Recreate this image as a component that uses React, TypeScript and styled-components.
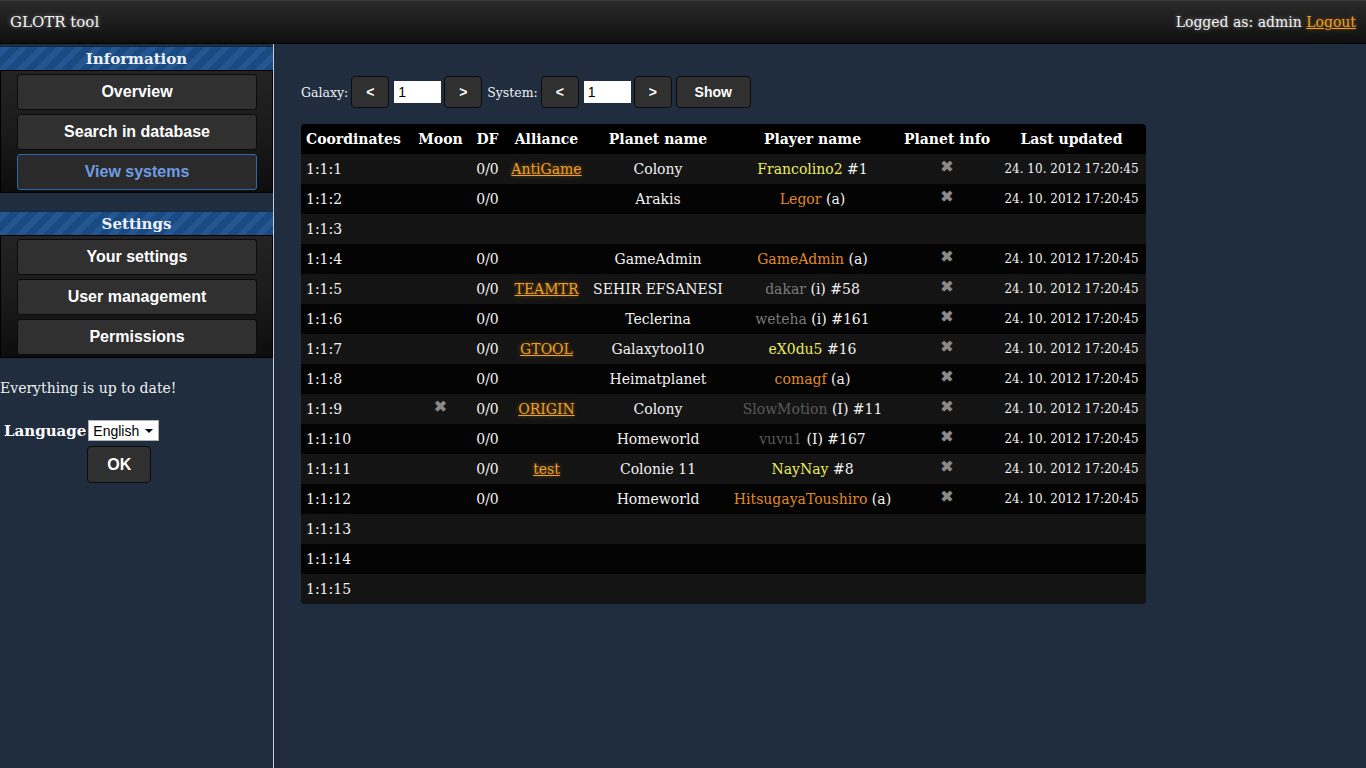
import React from 'react';
import styled, { createGlobalStyle, css } from 'styled-components';

const serif = `"DejaVu Serif", Georgia, serif`;
const sans = `"Liberation Sans", Arial, sans-serif`;

const Global = createGlobalStyle`
  html, body { margin: 0; padding: 0; background: #1f2d3e; }
  body { font-family: ${serif}; color: #fff; }
  * { box-sizing: border-box; }
`;

const texture = css`
  background-color: #393939;
  background-image: radial-gradient(rgba(0, 0, 0, 0.35) 0.6px, transparent 0.8px);
  background-size: 2px 2px;
`;

const Page = styled.div`
  min-height: 100vh;
  display: flex;
  flex-direction: column;
`;

const TopBar = styled.header`
  height: 44px;
  display: flex;
  align-items: center;
  justify-content: space-between;
  padding: 0 10px 0 10px;
  background: linear-gradient(#2a2a2a, #0f0f0f);
  border-top: 1px solid #3c3c3c;
  border-bottom: 1px solid #000;
  color: #f4f4f4;
  text-shadow: 0 0 4px rgba(255, 255, 255, 0.45);
`;

const Brand = styled.span`
  font-size: 15px;
`;

const UserInfo = styled.span`
  font-size: 14px;
`;

const Link = styled.a`
  color: #f0a024;
  text-decoration: underline;
  cursor: pointer;
  text-shadow: 0 0 4px rgba(240, 160, 36, 0.5);
`;

const Body = styled.div`
  flex: 1;
  display: flex;
`;

const Sidebar = styled.aside`
  width: 274px;
  flex: none;
  border-right: 1px solid #c6ccd3;
  padding-top: 2px;
  display: flex;
  flex-direction: column;
`;

const SectionTitle = styled.div<{ $first?: boolean }>`
  height: 25px;
  margin-top: ${(p) => (p.$first ? '0' : '18px')};
  display: flex;
  align-items: center;
  justify-content: center;
  font-weight: bold;
  font-size: 15px;
  color: #eef2f8;
  border-top: 1px solid #0f2a4a;
  border-bottom: 1px solid #000;
  background: repeating-linear-gradient(
    -45deg,
    #1a4a82 0px,
    #1a4a82 7px,
    #245791 7px,
    #245791 13px
  );
`;

const Menu = styled.nav`
  display: flex;
  flex-direction: column;
  gap: 4px;
  padding: 3px 15px 2px 16px;
  background: linear-gradient(#232323 0%, #1b1b1b 50%, #0d0d0d 100%);
  border: 1px solid #000;
  border-top: none;
`;

const MenuButton = styled.a<{ $active?: boolean }>`
  height: 36px;
  display: flex;
  align-items: center;
  justify-content: center;
  font-family: ${sans};
  font-weight: bold;
  font-size: 16px;
  border-radius: 3px;
  border: 1px solid #0b0b0b;
  color: #fff;
  ${texture}
  ${(p) =>
    p.$active &&
    css`
      background: #2a2a2a;
      border-color: #2f68ad;
      color: #6f9ce2;
    `}
`;

const Status = styled.p`
  margin: 22px 0 0 0;
  font-size: 14px;
  color: #f0f0f0;
`;

const LangForm = styled.div`
  display: grid;
  grid-template-columns: auto auto;
  justify-content: start;
  align-items: center;
  column-gap: 2px;
  row-gap: 5px;
  margin: 24px 0 0 4px;
`;

const LangLabel = styled.label`
  font-weight: bold;
  font-size: 15px;
`;

const SelectWrap = styled.span`
  position: relative;
  display: inline-block;
  width: 71px;
  height: 21px;
  &::after {
    content: '';
    position: absolute;
    right: 6px;
    top: 9px;
    border-left: 4px solid transparent;
    border-right: 4px solid transparent;
    border-top: 4px solid #000;
    pointer-events: none;
  }
`;

const Select = styled.select`
  appearance: none;
  -webkit-appearance: none;
  width: 100%;
  height: 100%;
  border: 1px solid #b0b0b0;
  border-radius: 0;
  background: #fff;
  font-family: ${sans};
  font-size: 14px;
  color: #000;
  padding: 0 0 0 4px;
`;

const OkButton = styled.button`
  grid-column: 2;
  width: 64px;
  height: 37px;
  margin-left: -1px;
  border-radius: 4px;
  border: 1px solid #0b0b0b;
  ${texture}
  color: #fff;
  font-family: ${sans};
  font-weight: bold;
  font-size: 16px;
`;

const Main = styled.main`
  flex: 1;
  padding: 32px 27px 0 27px;
`;

const Toolbar = styled.div`
  display: flex;
  align-items: center;
  gap: 4px;
`;

const ToolLabel = styled.span`
  font-size: 12.5px;
  color: #eef0f2;
  margin: 0 -1px 0 1px;
  &:first-child {
    margin-left: 0;
  }
`;

const ToolButton = styled.button<{ $wide?: boolean }>`
  height: 32px;
  width: ${(p) => (p.$wide ? '75px' : '38px')};
  border-radius: 4px;
  border: 1px solid #0b0b0b;
  ${texture}
  color: #fff;
  font-family: ${sans};
  font-weight: bold;
  font-size: 14px;
  padding: 0;
`;

const NumInput = styled.input`
  width: 47px;
  height: 22px;
  margin: 0 -1px 0 1px;
  border: none;
  background: #fff;
  font-family: ${sans};
  font-size: 14px;
  padding: 0 4px;
  color: #000;
`;

const Table = styled.table`
  margin-top: 16px;
  width: 845px;
  table-layout: fixed;
  border-collapse: separate;
  border-spacing: 0;
  border-radius: 4px;
  overflow: hidden;
  background: #000;
`;

const Th = styled.th<{ $left?: boolean }>`
  height: 30px;
  padding: 0 5px;
  text-align: ${(p) => (p.$left ? 'left' : 'center')};
  font-size: 14px;
  font-weight: bold;
  color: #fff;
  white-space: nowrap;
`;

const Row = styled.tr<{ $odd: boolean }>`
  height: 30px;
  background: ${(p) => (p.$odd ? '#141414' : '#040404')};
`;

const Td = styled.td<{ $left?: boolean; $small?: boolean }>`
  padding: 0 5px;
  text-align: ${(p) => (p.$left ? 'left' : 'center')};
  font-size: ${(p) => (p.$small ? '12px' : '14px')};
  color: #f2f2f2;
  white-space: nowrap;
`;

const Cross = styled.span`
  display: inline-block;
  font-family: "DejaVu Sans", sans-serif;
  font-size: 16px;
  color: #8a8a8a;
  position: relative;
  top: -3px;
  text-shadow: 0 0 1px rgba(140, 140, 140, 0.6);
`;

type Tone = 'yellow' | 'orange' | 'gray' | 'dim';
const toneColor: Record<Tone, string> = {
  yellow: '#ecec62',
  orange: '#e08a26',
  gray: '#7a7a7a',
  dim: '#5a5a5a',
};

const Player = styled.span<{ $tone: Tone }>`
  color: ${(p) => toneColor[p.$tone]};
`;

type SysRow = {
  pos: number;
  moon?: boolean;
  alliance?: string;
  planet?: string;
  player?: string;
  tone?: Tone;
  extra?: string;
};

const rows: SysRow[] = [
  { pos: 1, alliance: 'AntiGame', planet: 'Colony', player: 'Francolino2', tone: 'yellow', extra: ' #1' },
  { pos: 2, planet: 'Arakis', player: 'Legor', tone: 'orange', extra: ' (a)' },
  { pos: 3 },
  { pos: 4, planet: 'GameAdmin', player: 'GameAdmin', tone: 'orange', extra: ' (a)' },
  { pos: 5, alliance: 'TEAMTR', planet: 'SEHIR EFSANESI', player: 'dakar', tone: 'gray', extra: ' (i) #58' },
  { pos: 6, planet: 'Teclerina', player: 'weteha', tone: 'gray', extra: ' (i) #161' },
  { pos: 7, alliance: 'GTOOL', planet: 'Galaxytool10', player: 'eX0du5', tone: 'yellow', extra: ' #16' },
  { pos: 8, planet: 'Heimatplanet', player: 'comagf', tone: 'orange', extra: ' (a)' },
  { pos: 9, moon: true, alliance: 'ORIGIN', planet: 'Colony', player: 'SlowMotion', tone: 'dim', extra: ' (I) #11' },
  { pos: 10, planet: 'Homeworld', player: 'vuvu1', tone: 'dim', extra: ' (I) #167' },
  { pos: 11, alliance: 'test', planet: 'Colonie 11', player: 'NayNay', tone: 'yellow', extra: ' #8' },
  { pos: 12, planet: 'Homeworld', player: 'HitsugayaToushiro', tone: 'orange', extra: ' (a)' },
  { pos: 13 },
  { pos: 14 },
  { pos: 15 },
];

const colWidths = [110, 59, 35, 83, 140, 169, 100, 149];

export default function App() {
  return (
    <Page>
      <Global />
      <TopBar>
        <Brand>GLOTR tool</Brand>
        <UserInfo>
          Logged as: admin <Link>Logout</Link>
        </UserInfo>
      </TopBar>
      <Body>
        <Sidebar>
          <SectionTitle $first>Information</SectionTitle>
          <Menu>
            <MenuButton>Overview</MenuButton>
            <MenuButton>Search in database</MenuButton>
            <MenuButton $active>View systems</MenuButton>
          </Menu>
          <SectionTitle>Settings</SectionTitle>
          <Menu>
            <MenuButton>Your settings</MenuButton>
            <MenuButton>User management</MenuButton>
            <MenuButton>Permissions</MenuButton>
          </Menu>
          <Status>Everything is up to date!</Status>
          <LangForm>
            <LangLabel>Language</LangLabel>
            <SelectWrap>
              <Select defaultValue="en">
                <option value="en">English</option>
              </Select>
            </SelectWrap>
            <OkButton>OK</OkButton>
          </LangForm>
        </Sidebar>
        <Main>
          <Toolbar>
            <ToolLabel>Galaxy:</ToolLabel>
            <ToolButton>&lt;</ToolButton>
            <NumInput defaultValue="1" />
            <ToolButton>&gt;</ToolButton>
            <ToolLabel>System:</ToolLabel>
            <ToolButton>&lt;</ToolButton>
            <NumInput defaultValue="1" />
            <ToolButton>&gt;</ToolButton>
            <ToolButton $wide>Show</ToolButton>
          </Toolbar>
          <Table>
            <colgroup>
              {colWidths.map((w, i) => (
                <col key={i} style={{ width: w }} />
              ))}
            </colgroup>
            <thead>
              <tr>
                <Th $left>Coordinates</Th>
                <Th>Moon</Th>
                <Th>DF</Th>
                <Th>Alliance</Th>
                <Th>Planet name</Th>
                <Th>Player name</Th>
                <Th>Planet info</Th>
                <Th>Last updated</Th>
              </tr>
            </thead>
            <tbody>
              {rows.map((r, i) => {
                const filled = !!r.planet;
                return (
                  <Row key={r.pos} $odd={i % 2 === 0}>
                    <Td $left>1:1:{r.pos}</Td>
                    <Td>{r.moon ? <Cross>✖</Cross> : null}</Td>
                    <Td>{filled ? '0/0' : ''}</Td>
                    <Td>{r.alliance ? <Link>{r.alliance}</Link> : null}</Td>
                    <Td>{r.planet ?? ''}</Td>
                    <Td>
                      {filled ? (
                        <>
                          <Player $tone={r.tone!}>{r.player}</Player>
                          {r.extra}
                        </>
                      ) : null}
                    </Td>
                    <Td>{filled ? <Cross>✖</Cross> : null}</Td>
                    <Td $small>{filled ? '24. 10. 2012 17:20:45' : ''}</Td>
                  </Row>
                );
              })}
            </tbody>
          </Table>
        </Main>
      </Body>
    </Page>
  );
}
